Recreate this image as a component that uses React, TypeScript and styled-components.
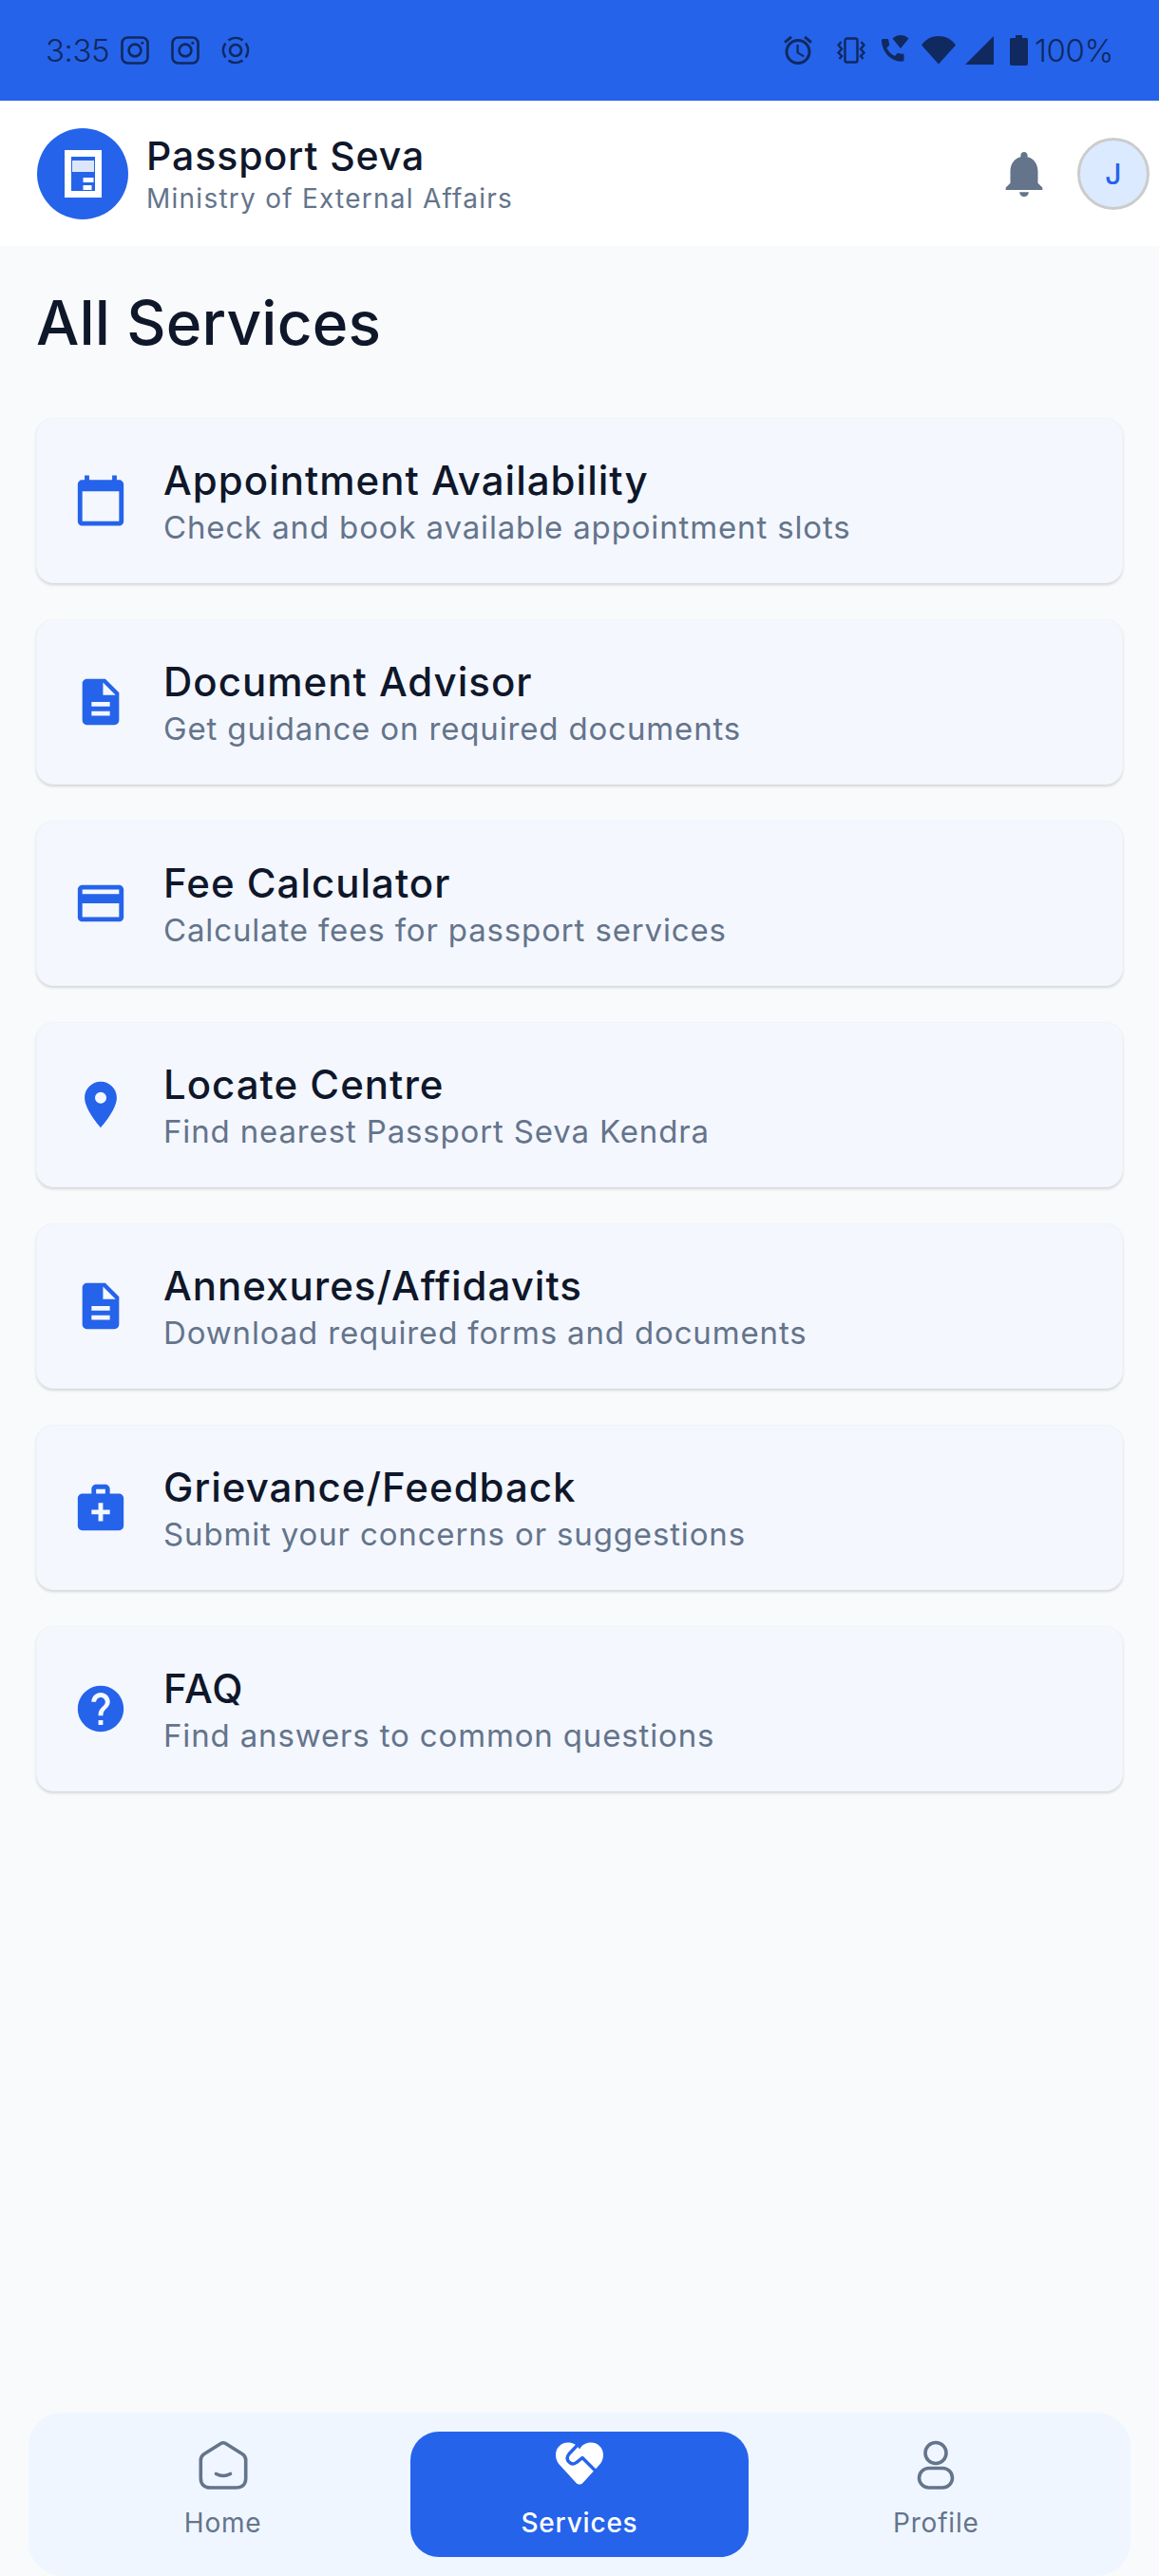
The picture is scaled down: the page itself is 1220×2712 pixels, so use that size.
import { ReactNode } from "react";
import styled, { createGlobalStyle } from "styled-components";
import {
  MdCalendarToday,
  MdDescription,
  MdCreditCard,
  MdLocationOn,
  MdMedicalServices,
  MdHelp,
  MdNotifications,
  MdOutlineAlarm,
} from "react-icons/md";

const GlobalStyle = createGlobalStyle`
  html, body {
    margin: 0;
    padding: 0;
    background: #f8fafc;
  }
  * {
    box-sizing: border-box;
  }
`;

const Page = styled.div`
  width: 1220px;
  height: 2712px;
  display: flex;
  flex-direction: column;
  background: #f8fafc;
  font-family: Inter, "Noto Sans", sans-serif;
  overflow: hidden;
`;

const StatusBar = styled.div`
  height: 106px;
  flex-shrink: 0;
  background: #2563eb;
  color: #10295f;
  display: flex;
  align-items: center;
  justify-content: space-between;
  padding: 0 48px 1px;
`;

const StatusGroup = styled.div<{ $gap: number }>`
  display: flex;
  align-items: center;
  gap: ${(p) => p.$gap}px;
`;

const StatusText = styled.span`
  font-size: 33px;
  font-weight: 300;
  letter-spacing: -0.4px;
  line-height: 40px;
`;

const Header = styled.div`
  height: 153px;
  flex-shrink: 0;
  background: #fff;
  display: flex;
  align-items: center;
  padding: 0 10px 0 39px;
`;

const Logo = styled.div`
  width: 96px;
  height: 96px;
  border-radius: 50%;
  background: #2563eb;
  display: flex;
  align-items: center;
  justify-content: center;
`;

const Brand = styled.div`
  flex: 1;
  margin-left: 19px;
  display: flex;
  flex-direction: column;
`;

const BrandName = styled.div`
  font-size: 41px;
  line-height: 52px;
  font-weight: 500;
  letter-spacing: 0.9px;
  color: #0f172a;
  margin-top: -2px;
`;

const BrandSub = styled.div`
  font-size: 28px;
  line-height: 34px;
  letter-spacing: 1.25px;
  color: #64748b;
  margin-top: 2px;
`;

const Bell = styled(MdNotifications)`
  color: #64748b;
  margin-right: 27px;
`;

const Avatar = styled.div`
  width: 76px;
  height: 76px;
  border-radius: 50%;
  background: #dbeafe;
  border: 3px solid #cccccc;
  color: #2563eb;
  font-size: 30px;
  font-weight: 500;
  display: flex;
  align-items: center;
  justify-content: center;
`;

const Main = styled.div`
  flex: 1;
  padding: 0 38px;
`;

const Title = styled.h1`
  margin: 0;
  padding-top: 42px;
  height: 181px;
  font-size: 64px;
  line-height: 78px;
  font-weight: 500;
  letter-spacing: 0.15px;
  color: #0f172a;
`;

const List = styled.div`
  display: flex;
  flex-direction: column;
  gap: 38px;
`;

const Card = styled.div`
  height: 174px;
  display: flex;
  align-items: center;
  gap: 37px;
  padding: 0 38px;
  background: #f4f7fe;
  border: 1px solid #f1f4f9;
  border-radius: 18px;
  box-shadow: 0 2px 3px rgba(0, 0, 0, 0.14);
  color: #2563eb;
`;

const CardText = styled.div`
  display: flex;
  flex-direction: column;
  padding-top: 5px;
`;

const CardTitle = styled.div`
  font-size: 42px;
  line-height: 50px;
  font-weight: 500;
  letter-spacing: 1px;
  color: #0f172a;
`;

const CardSub = styled.div`
  font-size: 33px;
  line-height: 48px;
  letter-spacing: 0.85px;
  color: #64748b;
`;

const BottomNav = styled.div`
  margin: 0 30px;
  height: 172px;
  flex-shrink: 0;
  padding: 20px 27px;
  display: grid;
  grid-template-columns: repeat(3, 1fr);
  gap: 20px;
  background: #eff6ff;
  border-radius: 36px;
`;

const Tab = styled.div<{ $active?: boolean }>`
  display: flex;
  flex-direction: column;
  align-items: center;
  padding-top: 9px;
  border-radius: 30px;
  background: ${(p) => (p.$active ? "#2563eb" : "transparent")};
  color: ${(p) => (p.$active ? "#fff" : "#64748b")};
  svg {
    height: 52px;
    display: block;
  }
`;

const TabLabel = styled.span<{ $active?: boolean }>`
  margin-top: 15px;
  font-size: 28px;
  line-height: 40px;
  letter-spacing: 0.8px;
  font-weight: ${(p) => (p.$active ? 500 : 400)};
`;

function Instagram() {
  return (
    <svg width="30" height="30" viewBox="0 0 30 30" fill="none" stroke="currentColor" strokeWidth="2.6">
      <rect x="1.5" y="1.5" width="27" height="27" rx="6" />
      <circle cx="15" cy="15" r="6.4" />
      <circle cx="22.8" cy="7.2" r="1.5" fill="currentColor" stroke="none" />
    </svg>
  );
}

function Ring() {
  return (
    <svg width="30" height="30" viewBox="0 0 30 30" fill="none" stroke="currentColor" strokeWidth="2.6">
      <circle cx="15" cy="15" r="6" />
      <path d="M7.54 4.35A13 13 0 0 1 22.46 4.35M25.65 7.54A13 13 0 0 1 25.65 22.46M22.46 25.65A13 13 0 0 1 7.54 25.65M4.35 22.46A13 13 0 0 1 4.35 7.54" />
    </svg>
  );
}

function Vibrate() {
  return (
    <svg width="30" height="32" viewBox="0 0 30 32" fill="none" stroke="currentColor" strokeWidth="2.4">
      <rect x="8.5" y="3.5" width="13" height="25" rx="2" />
      <path d="M4.500 7L1.500 10.500 5 14.500 1.500 18.500 5 22 2.500 25" />
      <path d="M25.500 7L28.500 10.500 25 14.500 28.500 18.500 25 22 27.500 25" />
    </svg>
  );
}

function CallWifi() {
  return (
    <svg width="32" height="33" viewBox="0 0 32 33" fill="currentColor">
      <path d="M1 6c.2-.7.7-1 1.400-1H7c.8 0 1.200.5 1.300 1.200.1 1.600.4 3 .9 4.300.2.600 0 1.100-.4 1.500l-2.500 2.400c1.700 3.500 4.900 6.800 8.600 8.500l2.300-2.500c.4-.4 1-.5 1.500-.4 1.400.4 2.900.7 4.500.8.800 0 1.300.5 1.300 1.300v5c0 1-.5 1.500-1.300 1.500C10.700 29.400 1 18 1 6z" />
      <path d="M12.500 4.500C15 2 18 1 21 1s6 1 8.500 3.500L21 15z" />
    </svg>
  );
}

function Wifi() {
  return (
    <svg width="36" height="31" viewBox="0 0 36 31" fill="currentColor">
      <path d="M0 10.500C4.500 4 11 1 18 1s13.500 3 18 9.500L18 30.500z" />
    </svg>
  );
}

function Signal() {
  return (
    <svg width="30" height="30" viewBox="0 0 30 30" fill="currentColor">
      <path d="M30 0V30H0z" />
    </svg>
  );
}

function Battery() {
  return (
    <svg width="19" height="32" viewBox="0 0 19 32" fill="currentColor">
      <path d="M6 0h7v3h4.500c.8 0 1.500.7 1.500 1.500V30c0 1-.8 2-2 2H2c-1.200 0-2-1-2-2V4.500C0 3.700.7 3 1.500 3H6z" />
    </svg>
  );
}

function LogoMark() {
  return (
    <svg width="39" height="50" viewBox="0 0 39 50" fill="#fff">
      <path fillRule="evenodd" d="M0 0H39V50H0zM7 7V43H32V7z" />
      <rect x="8" y="11" width="23" height="12" fill="#dbe6fb" />
      <rect x="19.500" y="29" width="11" height="5" />
      <rect x="19.500" y="37" width="9" height="5" />
    </svg>
  );
}

function HomeIcon() {
  return (
    <svg width="52" height="52" viewBox="0 0 52 52" fill="none" stroke="currentColor" strokeWidth="3.6" strokeLinecap="round" strokeLinejoin="round">
      <path d="M23.500 3.500a5 5 0 0 1 5 0L46 14.500c2.500 1.600 3.700 3.500 3.700 6.500v19c0 6.500-3.700 10-10 10H12.300c-6.300 0-10-3.500-10-10V21c0-3 1.200-4.900 3.700-6.500z" />
      <path d="M18.500 35.500c5 2.600 10 2.600 15 0" />
    </svg>
  );
}

function ServicesIcon() {
  return (
    <svg width="52" height="52" viewBox="0 0 52 52" fill="none">
      <path
        fill="#fff"
        d="M26 9.500C29 4.500 33 2.500 38 2.500c8 0 13 6 13 13 0 5-2 8.500-5 11.500L29.500 45c-2 2-5 2-7 0L6 27C3 24 1 20.500 1 15.500c0-7 5-13 13-13 5 0 9 2 12 7z"
      />
      <path
        stroke="#2563eb"
        strokeWidth="3.4"
        strokeLinecap="round"
        strokeLinejoin="round"
        d="M24 5L15 14.500c-2.500 3-2.500 6 0 8.500 2.500 2.400 5.500 2.400 8 .3L29 18.500 43.500 33"
      />
    </svg>
  );
}

function ProfileIcon() {
  return (
    <svg width="40" height="52" viewBox="0 0 40 52" fill="none" stroke="currentColor" strokeWidth="3.6">
      <circle cx="20" cy="13.500" r="11" />
      <rect x="2.500" y="29.500" width="35" height="20.500" rx="10.250" />
    </svg>
  );
}

const services: { title: string; sub: string; icon: ReactNode }[] = [
  { title: "Appointment Availability", sub: "Check and book available appointment slots", icon: <MdCalendarToday size={58} /> },
  { title: "Document Advisor", sub: "Get guidance on required documents", icon: <MdDescription size={58} /> },
  { title: "Fee Calculator", sub: "Calculate fees for passport services", icon: <MdCreditCard size={58} /> },
  { title: "Locate Centre", sub: "Find nearest Passport Seva Kendra", icon: <MdLocationOn size={58} /> },
  { title: "Annexures/Affidavits", sub: "Download required forms and documents", icon: <MdDescription size={58} /> },
  { title: "Grievance/Feedback", sub: "Submit your concerns or suggestions", icon: <MdMedicalServices size={58} /> },
  { title: "FAQ", sub: "Find answers to common questions", icon: <MdHelp size={58} /> },
];

export default function App() {
  return (
    <Page>
      <GlobalStyle />
      <StatusBar>
        <StatusGroup $gap={23}>
          <StatusGroup $gap={12}>
            <StatusText>3:35</StatusText>
            <Instagram />
          </StatusGroup>
          <Instagram />
          <Ring />
        </StatusGroup>
        <StatusGroup $gap={23}>
          <MdOutlineAlarm size={36} />
          <StatusGroup $gap={17}>
            <StatusGroup $gap={11}>
              <StatusGroup $gap={16}>
                <Vibrate />
                <CallWifi />
              </StatusGroup>
              <StatusGroup $gap={10}>
                <Wifi />
                <Signal />
              </StatusGroup>
            </StatusGroup>
            <StatusGroup $gap={7}>
              <Battery />
              <StatusText>100%</StatusText>
            </StatusGroup>
          </StatusGroup>
        </StatusGroup>
      </StatusBar>

      <Header>
        <Logo>
          <LogoMark />
        </Logo>
        <Brand>
          <BrandName>Passport Seva</BrandName>
          <BrandSub>Ministry of External Affairs</BrandSub>
        </Brand>
        <Bell size={58} />
        <Avatar>J</Avatar>
      </Header>

      <Main>
        <Title>All Services</Title>
        <List>
          {services.map((s) => (
            <Card key={s.title}>
              {s.icon}
              <CardText>
                <CardTitle>{s.title}</CardTitle>
                <CardSub>{s.sub}</CardSub>
              </CardText>
            </Card>
          ))}
        </List>
      </Main>

      <BottomNav>
        <Tab>
          <HomeIcon />
          <TabLabel>Home</TabLabel>
        </Tab>
        <Tab $active>
          <ServicesIcon />
          <TabLabel $active>Services</TabLabel>
        </Tab>
        <Tab>
          <ProfileIcon />
          <TabLabel>Profile</TabLabel>
        </Tab>
      </BottomNav>
    </Page>
  );
}
